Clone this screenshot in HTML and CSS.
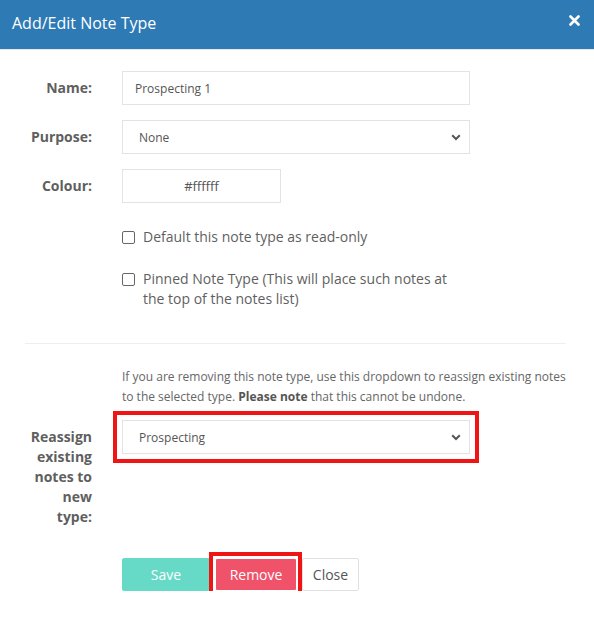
FILE: index.html
```html
<!DOCTYPE html>
<html lang="en">
<head>
    <meta charset="UTF-8">
    <meta name="viewport" content="width=device-width, initial-scale=1.0">
    <title>Add/Edit Note Type</title>
    <link rel="stylesheet" href="styles.css">
</head>
<body>
    <div class="modal">
        <div class="modal-header">
            <h4 class="modal-title">Add/Edit Note Type</h4>
            <span class="close-btn">
                <svg width="11" height="11" viewBox="0 0 11 11"><path d="M1.5 1.5 L9.5 9.5 M9.5 1.5 L1.5 9.5" stroke="#fff" stroke-width="2.6" stroke-linecap="round"/></svg>
            </span>
        </div>
        <div class="modal-body">
            <div class="form-row">
                <label class="row-label" for="note-name">Name:</label>
                <input type="text" id="note-name" class="field field-wide" value="Prospecting 1">
            </div>
            <div class="form-row">
                <label class="row-label" for="note-purpose">Purpose:</label>
                <div class="select-wrap field-wide">
                    <select id="note-purpose" class="field">
                        <option>None</option>
                    </select>
                    <svg class="chevron" width="10" height="7" viewBox="0 0 10 7"><path d="M1.2 1.3 L5 5 L8.8 1.3" fill="none" stroke="#555" stroke-width="2"/></svg>
                </div>
            </div>
            <div class="form-row">
                <label class="row-label" for="note-colour">Colour:</label>
                <input type="text" id="note-colour" class="field field-colour" value="#ffffff">
            </div>
            <div class="check-row">
                <label class="check"><input type="checkbox"><span>Default this note type as read-only</span></label>
            </div>
            <div class="check-row check-row-2">
                <label class="check"><input type="checkbox"><span>Pinned Note Type (This will place such notes at the top of the notes list)</span></label>
            </div>

            <hr class="divider">

            <p class="help">If you are removing this note type, use this dropdown to reassign existing notes to the selected type. <b>Please note</b> that this cannot be undone.</p>
            <div class="form-row reassign-row">
                <label class="row-label" for="note-reassign">Reassign existing notes to new type:</label>
                <div class="select-wrap field-wide marked">
                    <select id="note-reassign" class="field">
                        <option>Prospecting</option>
                    </select>
                    <svg class="chevron" width="10" height="7" viewBox="0 0 10 7"><path d="M1.2 1.3 L5 5 L8.8 1.3" fill="none" stroke="#555" stroke-width="2"/></svg>
                </div>
            </div>

            <div class="buttons">
                <button class="btn btn-save">Save</button>
                <button class="btn btn-remove">Remove</button>
                <button class="btn btn-close">Close</button>
            </div>
        </div>
    </div>
</body>
</html>
```
FILE: styles.css
```css
body {
    margin: 0;
    font-family: "Open Sans", "Liberation Sans", sans-serif;
    color: #555;
    background: #fff;
}
.modal {
    width: 594px;
}
.modal-header {
    height: 50px;
    background-color: #2d7ab5;
    border-bottom: 1px solid #e8e8e8;
    display: flex;
    align-items: center;
    justify-content: space-between;
    padding: 0 14px 0 12px;
    box-sizing: border-box;
}
.modal-title {
    margin: 0;
    font-size: 16px;
    font-weight: 400;
    color: #fff;
    padding-bottom: 3px;
}
.close-btn {
    display: flex;
    padding-bottom: 9px;
}
.modal-body {
    padding: 21px 28px 0 25px;
}
.form-row {
    display: grid;
    grid-template-columns: 67px 348px;
    column-gap: 30px;
    margin-bottom: 15px;
}
.row-label {
    font-size: 14px;
    font-weight: 700;
    line-height: 20px;
    text-align: right;
    padding-top: 7px;
    color: #5f5f5f;
}
.field {
    height: 34px;
    box-sizing: border-box;
    border: 1px solid #e3e3e3;
    border-radius: 0;
    font-family: "Open Sans", "Liberation Sans", sans-serif;
    font-size: 12px;
    color: #555;
    background: #fff;
    padding: 0 12px;
    outline: none;
}
.field-wide {
    width: 348px;
}
.field-colour {
    width: 159px;
    text-align: center;
    font-size: 13px;
    margin-bottom: 9px;
}
.select-wrap {
    position: relative;
    height: 34px;
}
.select-wrap select {
    width: 100%;
    appearance: none;
    -webkit-appearance: none;
    padding-left: 16px;
}
.chevron {
    position: absolute;
    right: 9px;
    top: 14px;
    pointer-events: none;
}
.check-row {
    padding-left: 97px;
}
.check-row-2 {
    margin-top: 22px;
}
.check {
    display: flex;
    align-items: flex-start;
    gap: 8px;
    font-size: 14px;
    line-height: 20px;
    color: #5f5f5f;
    width: 345px;
}
.check input {
    appearance: none;
    -webkit-appearance: none;
    width: 13px;
    height: 13px;
    border: 1px solid #666;
    border-radius: 2px;
    margin: 4px 0 0;
    flex-shrink: 0;
    box-sizing: border-box;
}
.divider {
    border: 0;
    border-top: 1px solid #eee;
    margin: 34px 0 23px;
}
.help {
    margin: 0 0 13px 97px;
    font-size: 12px;
    line-height: 20px;
    color: #666;
}
.help b {
    color: #555;
}
.reassign-row {
    margin-bottom: 31px;
}
.marked {
    outline: 4px solid #f01515;
    outline-offset: 5px;
}
.buttons {
    display: flex;
    gap: 5px;
    padding-left: 97px;
}
.btn {
    height: 33px;
    box-sizing: border-box;
    border-radius: 2px;
    font-family: "Open Sans", "Liberation Sans", sans-serif;
    font-size: 14px;
    padding: 0;
    cursor: pointer;
}
.btn-save {
    width: 88px;
    background: #66dac6;
    border: 1px solid #66dac6;
    color: #fff;
}
.btn-remove {
    position: relative;
    width: 82px;
    background: #f0526a;
    border: 1px solid #fff;
    color: #fff;
}
/* red marker box drawn over the Remove button */
.btn-remove::after {
    content: "";
    position: absolute;
    top: -7px;
    left: -7px;
    right: -6px;
    bottom: -7px;
    border: 4px solid #f01515;
}
.btn-close {
    width: 57px;
    background: #fff;
    border: 1px solid #e0e0e0;
    color: #555;
}
```
